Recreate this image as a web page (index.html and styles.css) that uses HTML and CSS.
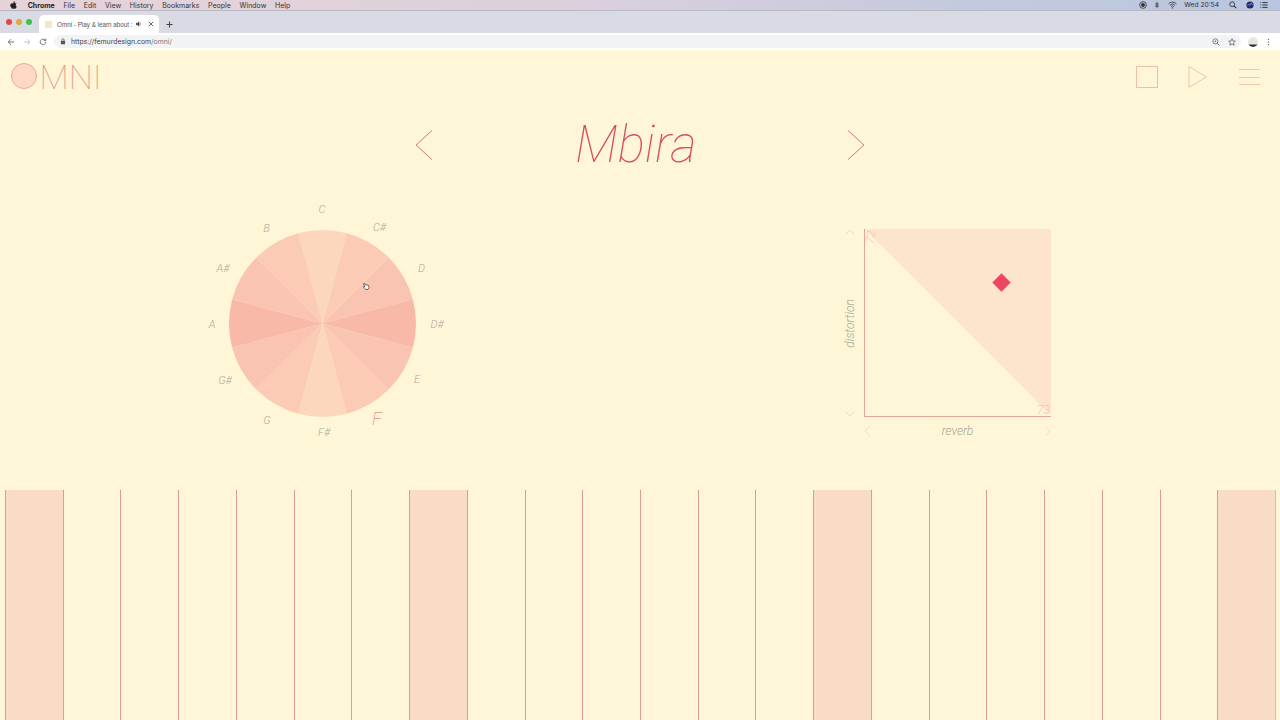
FILE: index.html
```html
<!DOCTYPE html>
<html lang="en">
<head>
<meta charset="utf-8">
<title>Omni</title>
<link rel="stylesheet" href="styles.css">
</head>
<body>
<div class="menubar">
  <div class="menu-left">
    <svg class="apple" viewBox="0 0 12 14"><path d="M8.6 0.4c.1 1-.3 1.9-.8 2.5-.6.7-1.4 1.1-2.200 1-.1-.9.3-1.900.8-2.400C7 .9 7.900.5 8.600.4zM11.300 4.800c-.9.6-1.400 1.400-1.400 2.400 0 1.200.7 2.100 1.800 2.600-.3.900-.7 1.600-1.200 2.300-.6.900-1.200 1.500-2 1.500s-1.100-.5-2.100-.5-1.300.5-2.100.5c-.8 0-1.400-.7-2-1.600C.9 10.700.3 9 .3 7.500c0-2.400 1.500-3.700 3.100-3.700.9 0 1.600.6 2.200.6.500 0 1.400-.7 2.400-.7 1.300 0 2.300.6 3.300 1.100z"/></svg>
    <span class="menu-app">Chrome</span>
    <span>File</span><span>Edit</span><span>View</span><span>History</span><span>Bookmarks</span><span>People</span><span>Window</span><span>Help</span>
  </div>
  <div class="menu-right">
    <svg class="status" viewBox="0 0 10 10"><circle cx="5" cy="5" r="4.200" fill="none" stroke="#333" stroke-width="1"/><circle cx="5" cy="5" r="2.400" fill="#333"/></svg>
    <svg class="status" viewBox="0 0 10 10"><path d="M5 1v8M3 3.500h4M2.500 6.500h5M3.500 5h3" stroke="#444" stroke-width="1" fill="none"/></svg>
    <svg class="status wifi" viewBox="0 0 12 10"><path d="M1 3.500a7 7 0 0 1 10 0M2.700 5.300a4.600 4.600 0 0 1 6.600 0M4.300 7a2.300 2.300 0 0 1 3.400 0" stroke="#333" stroke-width="1" fill="none"/><circle cx="6" cy="8.600" r=".8" fill="#333"/></svg>
    <span class="clock">Wed 20:54</span>
    <svg class="status" viewBox="0 0 10 10"><circle cx="4" cy="4" r="3" fill="none" stroke="#333" stroke-width="1.100"/><path d="M6.200 6.200L9 9" stroke="#333" stroke-width="1.300"/></svg>
    <svg class="status siri" viewBox="0 0 10 10"><circle cx="5" cy="5" r="4.500" fill="#262a5e"/><path d="M2 5.500C3.500 2.500 4.500 7.500 5.500 4S7.500 5 8.200 5" stroke="#7aa0f0" stroke-width="1.200" fill="none"/></svg>
    <svg class="status" viewBox="0 0 10 10"><path d="M.5 2h1M3 2h6.500M.5 5h1M3 5h6.500M.5 8h1M3 8h6.500" stroke="#222" stroke-width="1.100" fill="none"/></svg>
  </div>
</div>
<div class="tabstrip">
  <div class="lights"><i class="light red"></i><i class="light yellow"></i><i class="light green"></i></div>
  <div class="tab">
    <i class="favicon"></i>
    <span class="tab-title">Omni - Play &amp; learn about :</span>
    <svg class="tab-icon speaker" viewBox="0 0 8 8"><path d="M0 3h2l2-2v6L2 5H0zM6 2.500v3" fill="#444" stroke="#444" stroke-width=".7"/></svg>
    <svg class="tab-icon" viewBox="0 0 8 8"><path d="M1 1l6 6M7 1L1 7" stroke="#333" stroke-width="1" fill="none"/></svg>
  </div>
  <svg class="plus" viewBox="0 0 8 8"><path d="M4 .5v7M.5 4h7" stroke="#444" stroke-width="1.200"/></svg>
</div>
<div class="toolbar">
  <svg class="nav" viewBox="0 0 10 10"><path d="M9 5H1.500M5 1.500L1.500 5 5 8.500" stroke="#555" stroke-width="1" fill="none"/></svg>
  <svg class="nav" viewBox="0 0 10 10"><path d="M1 5h7.500M5 1.500L8.500 5 5 8.500" stroke="#b5b7ba" stroke-width="1" fill="none"/></svg>
  <svg class="nav" viewBox="0 0 10 10"><path d="M8.500 5A3.500 3.500 0 1 1 7.500 2.500M8.500 .8v2.600H5.900" stroke="#555" stroke-width="1" fill="none"/></svg>
  <div class="omnibox">
    <svg class="lock" viewBox="0 0 8 10"><rect x="1" y="4" width="6" height="5" rx=".8" fill="#555"/><path d="M2.300 4V2.800a1.700 1.700 0 0 1 3.400 0V4" stroke="#555" fill="none"/></svg>
    <span class="url"><b>https://femurdesign.com</b>/omni/</span>
    <svg class="omni-icon" viewBox="0 0 10 10"><circle cx="4.200" cy="4.200" r="3.200" fill="none" stroke="#666" stroke-width="1"/><path d="M6.500 6.500L9.300 9.300" stroke="#666" stroke-width="1.200"/><path d="M2.800 4.200h2.800M4.200 2.800v2.800" stroke="#666" stroke-width=".7"/></svg>
    <svg class="omni-icon" viewBox="0 0 10 10"><path d="M5 .9l1.200 2.800 3 .3-2.300 2 .7 3L5 7.400 2.400 9l.7-3-2.300-2 3-.3z" fill="none" stroke="#555" stroke-width=".9"/></svg>
  </div>
  <i class="avatar"></i>
  <svg class="kebab" viewBox="0 0 4 10"><circle cx="2" cy="1.500" r=".9"/><circle cx="2" cy="5" r=".9"/><circle cx="2" cy="8.500" r=".9"/></svg>
</div>
<main class="page">
  <header class="header">
    <div class="logo"><i class="logo-o"></i><span class="logo-text">MNI</span></div>
    <div class="controls">
      <i class="stop"></i>
      <svg class="play" viewBox="0 0 20 24"><path d="M1 1.500L18.500 12 1 22.500z"/></svg>
      <div class="burger"><i></i><i></i><i></i></div>
    </div>
  </header>
  <div class="title-row">
    <svg class="arrow" viewBox="0 0 18 30"><path d="M17 .5L1 15l16 14.500"/></svg>
    <h1 class="title">Mbira</h1>
    <svg class="arrow" viewBox="0 0 18 30"><path d="M1 .5L17 15 1 29.500"/></svg>
  </div>
  <section class="instruments">
    <div class="wheel">
      <svg class="wheel-svg" viewBox="0 0 250 250">
        <g transform="translate(122.500 128.500)">
          <path class="w0" d="M0 0L-24.200 -90.300A93.500 93.500 0 0 1 24.200 -90.300Z"/>
          <path class="w1" d="M0 0L24.200 -90.300A93.500 93.500 0 0 1 66.100 -66.100Z"/>
          <path class="w2" d="M0 0L66.100 -66.100A93.500 93.500 0 0 1 90.300 -24.200Z"/>
          <path class="w3" d="M0 0L90.300 -24.200A93.500 93.500 0 0 1 90.300 24.200Z"/>
          <path class="w2" d="M0 0L90.300 24.200A93.500 93.500 0 0 1 66.100 66.100Z"/>
          <path class="w1" d="M0 0L66.100 66.100A93.500 93.500 0 0 1 24.200 90.300Z"/>
          <path class="w0" d="M0 0L24.200 90.300A93.500 93.500 0 0 1 -24.200 90.300Z"/>
          <path class="w1" d="M0 0L-24.200 90.300A93.500 93.500 0 0 1 -66.100 66.100Z"/>
          <path class="w2" d="M0 0L-66.100 66.100A93.500 93.500 0 0 1 -90.300 24.200Z"/>
          <path class="w3" d="M0 0L-90.300 24.200A93.500 93.500 0 0 1 -90.300 -24.200Z"/>
          <path class="w2" d="M0 0L-90.300 -24.200A93.500 93.500 0 0 1 -66.100 -66.100Z"/>
          <path class="w1" d="M0 0L-66.100 -66.100A93.500 93.500 0 0 1 -24.200 -90.300Z"/>
        </g>
        <text x="122" y="18">C</text>
        <text x="179.500" y="36">C#</text>
        <text x="221.500" y="76.500">D</text>
        <text x="237" y="133">D#</text>
        <text x="217" y="188">E</text>
        <text class="note-on" x="177" y="230">F</text>
        <text x="124" y="241">F#</text>
        <text x="67" y="229">G</text>
        <text x="25" y="189">G#</text>
        <text x="12" y="133">A</text>
        <text x="23" y="76.500">A#</text>
        <text x="66.500" y="37">B</text>
      </svg>
      <svg class="cursor" viewBox="0 0 10 10"><path d="M2 1.500l1.300-.5 1.200 2.200 1.500-.3 2 .8.700 2.500-1.200 2.500H4.500L1.800 5.500l.8-.6 1 .8z" fill="#fff" stroke="#333" stroke-width=".9"/></svg>
    </div>
    <div class="xy">
      <div class="y-axis">
        <svg class="tick" viewBox="0 0 10 6"><path d="M.5 5.500L5 1l4.500 4.500"/></svg>
        <span class="y-label">distortion</span>
        <svg class="tick" viewBox="0 0 10 6"><path d="M.5 .5L5 5l4.500-4.500"/></svg>
      </div>
      <div class="pad">
        <span class="val val-top">72</span>
        <span class="val val-bottom">73</span>
        <i class="diamond"></i>
      </div>
      <div class="x-axis">
        <svg class="tick-h" viewBox="0 0 6 10"><path d="M5.500 .5L1 5l4.500 4.500"/></svg>
        <span class="x-label">reverb</span>
        <svg class="tick-h" viewBox="0 0 6 10"><path d="M.5 .5L5 5 .5 9.500"/></svg>
      </div>
    </div>
  </section>
  <section class="keys">
    <div class="key on"></div><div class="key"></div><div class="key"></div><div class="key"></div><div class="key"></div><div class="key"></div><div class="key"></div>
    <div class="key on"></div><div class="key"></div><div class="key"></div><div class="key"></div><div class="key"></div><div class="key"></div><div class="key"></div>
    <div class="key on"></div><div class="key"></div><div class="key"></div><div class="key"></div><div class="key"></div><div class="key"></div><div class="key"></div>
    <div class="key on"></div>
  </section>
</main>
</body>
</html>
```
FILE: styles.css
```css
* { box-sizing: border-box; }
html, body { margin: 0; height: 720px; overflow: hidden; }
body { display: flex; flex-direction: column; font-family: "Roboto", "Liberation Sans", sans-serif; background: #fef6d6; }
i { display: block; }

.menubar { height: 11px; flex: none; display: flex; justify-content: space-between; align-items: center; padding: 0 12.500px 0 10px; background: linear-gradient(90deg, #e6d3d8 0%, #dcd0dc 45%, #c4cade 75%, #b8c6e0 100%); font: 7px "Inter", "Liberation Sans", sans-serif; color: #333; border-bottom: 1px solid #b9b8c4; }
.menu-left { display: flex; align-items: center; gap: 8.700px; }
.apple { width: 7px; height: 8px; fill: #222; margin-right: 2px; }
.menu-app { font-weight: 700; color: #222; }
.menu-right { display: flex; align-items: center; gap: 6px; }
.status { width: 8px; height: 8px; }
.wifi { width: 11px; }
.clock { font-size: 6.700px; margin-right: 4px; }
.siri { margin-left: 2.500px; }

.tabstrip { height: 22px; flex: none; display: flex; align-items: flex-end; background: #d8dbe3; padding-left: 6px; }
.lights { display: flex; gap: 4px; align-self: flex-start; margin-top: 8px; width: 33px; }
.light { width: 6px; height: 6px; border-radius: 50%; }
.red { background: #e8414d; }
.yellow { background: #e5a93a; }
.green { background: #3fc24f; }
.tab { width: 120px; height: 18px; background: #fff; border-radius: 5px 5px 0 0; display: flex; align-items: center; padding: 0 5px 0 6px; font: 6.300px "Liberation Sans", sans-serif; color: #555; }
.favicon { width: 7px; height: 7px; background: #f8e6c4; margin-right: 5px; flex: none; }
.tab-title { flex: 1; white-space: nowrap; }
.tab-icon { width: 6px; height: 6px; margin-left: 6px; flex: none; }
.tab-icon.speaker { margin-left: 2px; }
.plus { width: 7px; height: 7px; margin: 0 0 5px 7px; }

.toolbar { height: 17px; flex: none; display: flex; align-items: center; background: #fff; padding: 0 10px 0 7px; gap: 8px; }
.nav { width: 8px; height: 8px; }
.omnibox { flex: 1; height: 13px; margin-left: -1px; background: #f1f3f4; border-radius: 7px; display: flex; align-items: center; padding: 0 3px 0 6px; gap: 6px; font: 6.900px "Inter", "Liberation Sans", sans-serif; color: #777; }
.lock { width: 6px; height: 7px; margin-right: -1px; }
.url { flex: 1; }
.url b { font-weight: 400; color: #444; }
.omni-icon { width: 8px; height: 8px; margin-right: 2px; }
.avatar { width: 10px; height: 10px; border-radius: 50%; background: linear-gradient(180deg, #e6e6e4 0 65%, #333 85%); margin-left: -1.500px; }
.kebab { width: 3px; height: 8px; fill: #666; margin-left: 1.500px; }

.page { flex: 1; display: flex; flex-direction: column; min-height: 0; }
.header { height: 52px; flex: none; display: flex; justify-content: space-between; align-items: flex-start; padding: 13px 20px 0 11px; }
.logo { display: flex; align-items: center; height: 26px; }
.logo-o { width: 26px; height: 26px; border-radius: 50%; background: #fdd9c5; border: 1.500px solid #e9a798; }
.logo-text { font-weight: 100; font-size: 34px; line-height: 26px; color: #e29a8c; margin: 1px 0 0 2.500px; }
.controls { display: flex; align-items: center; gap: 30px; padding-top: 2px; }
.stop { width: 22px; height: 22px; border: 1px solid #eac0a6; }
.play { width: 20px; height: 24px; fill: none; stroke: #f0c6ac; stroke-width: 1; margin-right: 1px; }
.burger { width: 21px; display: flex; flex-direction: column; gap: 6.500px; }
.burger i { height: 1px; background: #f0c6ac; }

.title-row { width: 450px; height: 42px; flex: none; margin: 22px 0 0 415px; display: flex; align-items: center; justify-content: space-between; }
.arrow { width: 18px; height: 30px; fill: none; stroke: #cf7a7c; stroke-width: 1; }
.title { margin: 0 8px 0 0; font-weight: 100; font-style: italic; font-size: 51px; line-height: 42px; color: #d94a5c; }

.instruments { flex: none; height: 324px; display: flex; justify-content: space-between; align-items: flex-start; padding: 0 229px 0 200px; }
.wheel { position: relative; width: 250px; height: 250px; margin-top: 29px; }
.wheel-svg { display: block; width: 250px; height: 250px; overflow: visible; }
.wheel-svg text { font-family: "Roboto", sans-serif; font-weight: 300; font-style: italic; font-size: 11px; text-anchor: middle; fill: #aeaa9e; }
.wheel-svg text.note-on { font-size: 18px; font-weight: 100; fill: #d9646c; }
.w0 { fill: #fcd7bd; }
.w1 { fill: #fbcbb5; }
.w2 { fill: #f9c4b1; }
.w3 { fill: #f9b9a9; }
.cursor { position: absolute; left: 162px; top: 87px; width: 8px; height: 9px; }

.xy { display: grid; grid-template-columns: 29px 187px; grid-template-rows: 188px 28px; margin-top: 63px; }
.y-axis { display: flex; flex-direction: column; align-items: center; justify-content: space-between; height: 188px; }
.tick { width: 10px; height: 6px; fill: none; stroke: #f2d9c0; stroke-width: 1; }
.y-label { writing-mode: vertical-rl; transform: rotate(180deg); font-style: italic; font-weight: 300; font-size: 12px; color: #aaa699; }
.pad { position: relative; border-left: 1px solid #e0a898; border-bottom: 1px solid #e0a898; background: linear-gradient(to top right, transparent 50%, #fde5cd 50%); }
.val { position: absolute; font-size: 12px; font-style: italic; font-weight: 300; color: #f6c2b2; line-height: 12px; }
.val-top { left: -1px; top: 2px; transform: rotate(-80deg); }
.val-bottom { right: 1px; bottom: 0; }
.diamond { position: absolute; left: 129.500px; top: 46.500px; width: 13px; height: 13px; background: #ee4560; transform: rotate(45deg); }
.x-axis { grid-column: 2; display: flex; align-items: center; justify-content: space-between; padding: 0 0 0 0; }
.tick-h { width: 6px; height: 10px; fill: none; stroke: #f2d9c0; stroke-width: 1; }
.x-label { font-style: italic; font-weight: 300; font-size: 12px; color: #aaa699; }

.keys { flex: 1; display: grid; grid-template-columns: repeat(22, 1fr); padding: 0 5px; min-height: 0; }
.key { border-left: 1px solid #dd9c8e; }
.key:last-child { border-right: 1px solid #e8ab9c; }
.key.on { background: #f9dcc5; border-right: 1px solid #eeb4a4; margin-right: -1px; }
```
